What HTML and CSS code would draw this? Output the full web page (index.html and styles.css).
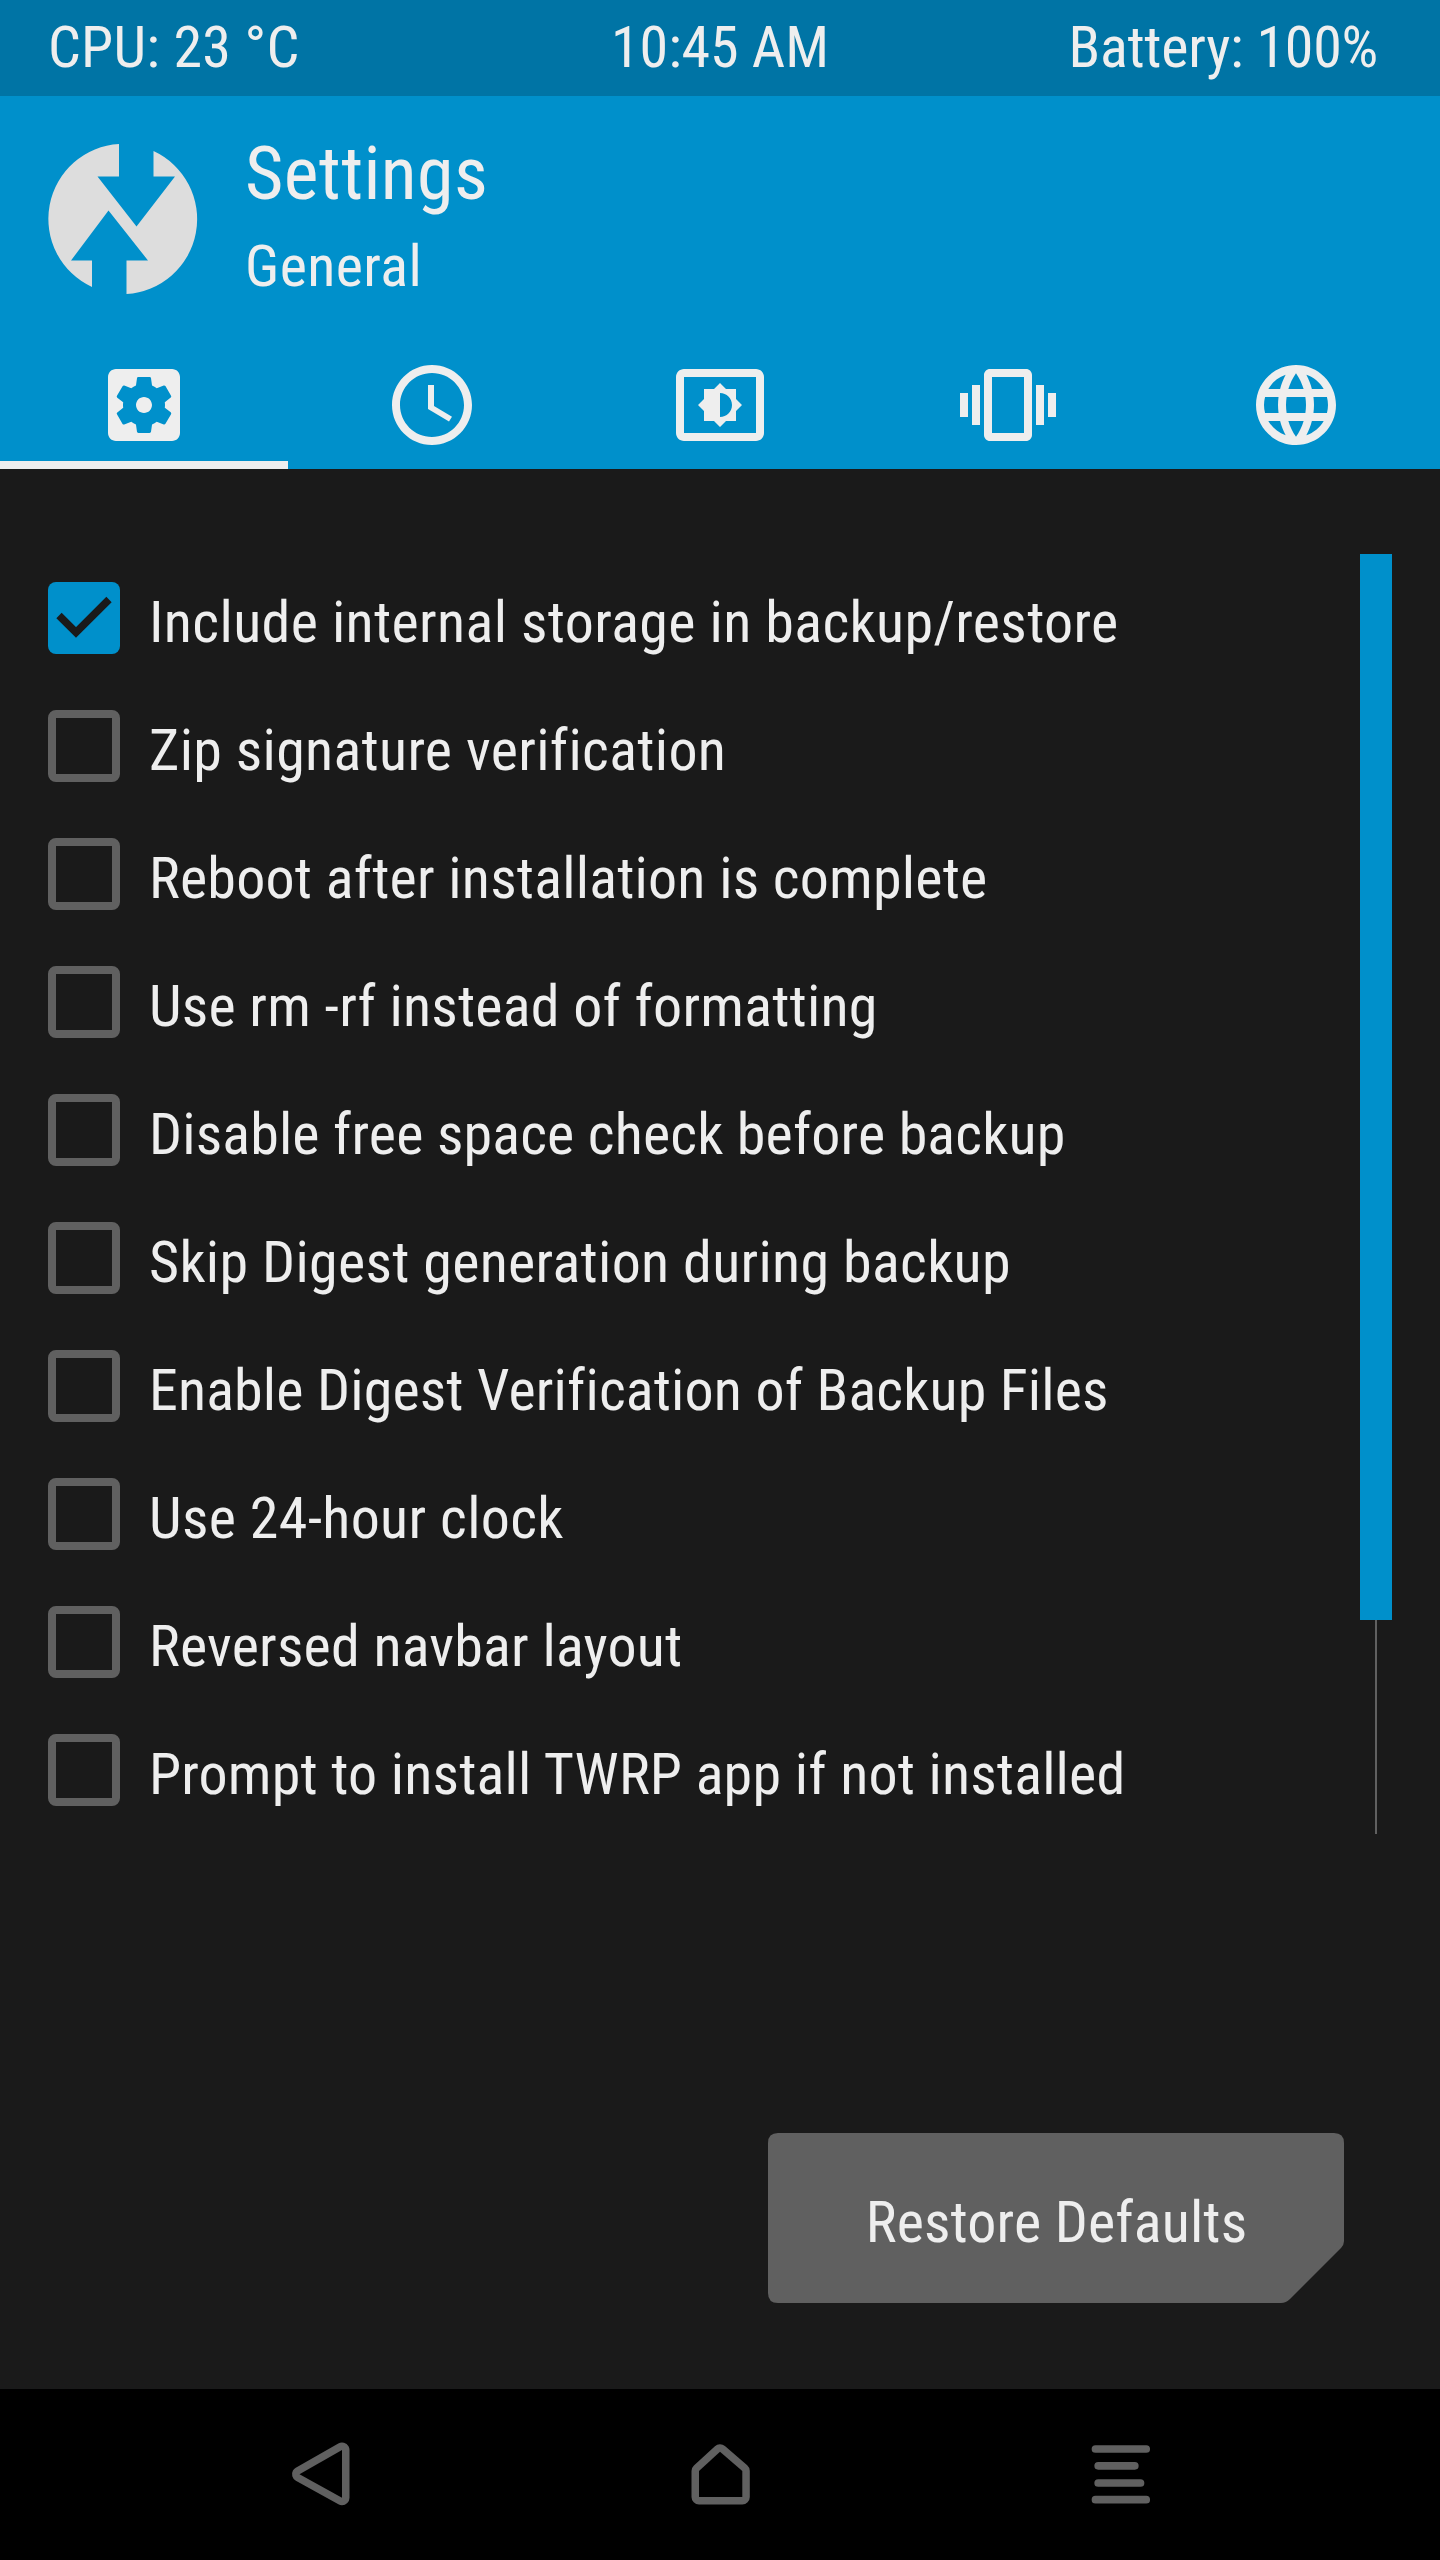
FILE: index.html
```html
<!DOCTYPE html>
<html lang="en">
<head>
<meta charset="utf-8">
<title>Settings</title>
<link rel="stylesheet" href="styles.css">
</head>
<body>
<header class="status">
  <span class="status-cpu">CPU: 23 °C</span>
  <span class="status-time">10:45 AM</span>
  <span class="status-battery">Battery: 100%</span>
</header>
<section class="head">
  <div class="title-row">
    <svg class="logo" viewBox="0 0 150 150" aria-hidden="true"><path fill="#ddd" d="M71 0V32.500H49.500L88.500 82.500L127 32.500H105.500V7A75 75 0 0 1 78.500 150V116.500H100L60.500 66.500L23 116.500H44V143A75 75 0 0 1 71 0Z"/></svg>
    <div class="titles">
      <h1 class="title">Settings</h1>
      <p class="subtitle">General</p>
    </div>
  </div>
  <nav class="tabs">
    <a class="tab tab-active"><svg class="tab-icon" viewBox="0 0 24 24"><path d="M12 10c-1.100 0-2 .9-2 2s.9 2 2 2 2-.9 2-2-.9-2-2-2zm7-7H5c-1.110 0-2 .9-2 2v14c0 1.100.89 2 2 2h14c1.110 0 2-.9 2-2V5c0-1.100-.89-2-2-2zm-1.750 9c0 .23-.02.46-.05.68l1.480 1.160c.13.110.17.300.080.450l-1.400 2.420c-.09.150-.27.210-.43.150l-1.740-.7c-.36.280-.76.510-1.180.690l-.26 1.850c-.03.170-.18.300-.35.300h-2.800c-.17 0-.32-.13-.35-.29l-.26-1.850c-.43-.18-.82-.41-1.180-.69l-1.740.7c-.16.060-.34 0-.43-.15l-1.400-2.420c-.09-.15-.05-.34.080-.45l1.480-1.160c-.03-.23-.05-.46-.05-.69 0-.23.020-.46.050-.68l-1.480-1.160c-.13-.11-.17-.3-.08-.45l1.400-2.420c.09-.15.270-.21.430-.15l1.740.7c.36-.28.760-.51 1.180-.69l.26-1.850c.03-.17.180-.3.350-.3h2.800c.17 0 .32.130.350.290l.26 1.850c.43.180.82.410 1.180.690l1.740-.7c.16-.06.340 0 .43.150l1.400 2.420c.09.150.050.340-.08.450l-1.480 1.160c.03.230.050.460.050.690z"/></svg></a>
    <a class="tab"><svg class="tab-icon" viewBox="0 0 24 24"><path d="M11.990 2C6.470 2 2 6.480 2 12s4.470 10 9.990 10C17.520 22 22 17.520 22 12S17.520 2 11.990 2zM12 20c-4.420 0-8-3.580-8-8s3.580-8 8-8 8 3.580 8 8-3.580 8-8 8zM12.500 7H11v6l5.250 3.150.75-1.230-4.500-2.670z"/></svg></a>
    <a class="tab"><svg class="tab-icon" viewBox="0 0 24 24"><path d="M21 3H3c-1.110 0-2 .89-2 2v14c0 1.100.89 2 2 2h18c1.110 0 2-.9 2-2V5c0-1.110-.89-2-2-2zm0 16H3V5h18v14zM8 16h2.500l1.500 1.500 1.500-1.500H16v-2.500l1.500-1.500-1.500-1.500V8h-2.500L12 6.500 10.500 8H8v2.500L6.500 12 8 13.500V16zm4-7c1.660 0 3 1.340 3 3s-1.340 3-3 3V9z"/></svg></a>
    <a class="tab"><svg class="tab-icon" viewBox="0 0 24 24"><path d="M0 15h2V9H0v6zm3 2h2V7H3v10zm19-8v6h2V9h-2zm-3 8h2V7h-2v10zM16.500 3h-9C6.670 3 6 3.670 6 4.500v15c0 .83.67 1.500 1.500 1.500h9c.83 0 1.500-.67 1.500-1.500v-15c0-.83-.67-1.500-1.500-1.500zM16 19H8V5h8v14z"/></svg></a>
    <a class="tab"><svg class="tab-icon" viewBox="0 0 24 24"><path d="M11.990 2C6.470 2 2 6.480 2 12s4.470 10 9.990 10C17.520 22 22 17.520 22 12S17.520 2 11.990 2zm6.930 6h-2.950c-.32-1.250-.78-2.450-1.380-3.560 1.840.63 3.370 1.910 4.330 3.560zM12 4.040c.83 1.200 1.480 2.530 1.910 3.960h-3.820c.43-1.430 1.080-2.760 1.910-3.960zM4.260 14C4.100 13.360 4 12.690 4 12s.1-1.360.26-2h3.380c-.08.660-.14 1.320-.14 2 0 .68.060 1.340.14 2H4.260zm.82 2h2.950c.32 1.250.78 2.450 1.380 3.560-1.840-.63-3.370-1.900-4.330-3.560zm2.950-8H5.080c.96-1.660 2.490-2.930 4.330-3.560C8.810 5.550 8.350 6.750 8.030 8zM12 19.960c-.83-1.200-1.480-2.530-1.910-3.960h3.820c-.43 1.430-1.080 2.760-1.910 3.960zM14.340 14H9.660c-.09-.66-.16-1.320-.16-2 0-.68.070-1.350.16-2h4.680c.09.650.160 1.320.160 2 0 .68-.07 1.340-.16 2zm.25 5.560c.6-1.110 1.060-2.310 1.380-3.560h2.950c-.96 1.650-2.490 2.930-4.330 3.560zM16.360 14c.08-.66.140-1.320.140-2 0-.68-.06-1.340-.14-2h3.380c.16.640.260 1.310.260 2s-.1 1.360-.26 2h-3.380z"/></svg></a>
  </nav>
</section>
<main class="content">
  <div class="list-row">
    <ul class="options">
      <li class="option"><svg class="box" viewBox="0 0 72 72"><rect width="72" height="72" rx="8" fill="#0090cb"/><path d="M11 33.500L28 50.500L61 17.500" fill="none" stroke="#1a1a1a" stroke-width="7.500"/></svg><span class="label">Include internal storage in backup/restore</span></li>
      <li class="option"><i class="box box-empty"></i><span class="label">Zip signature verification</span></li>
      <li class="option"><i class="box box-empty"></i><span class="label">Reboot after installation is complete</span></li>
      <li class="option"><i class="box box-empty"></i><span class="label">Use rm -rf instead of formatting</span></li>
      <li class="option"><i class="box box-empty"></i><span class="label">Disable free space check before backup</span></li>
      <li class="option"><i class="box box-empty"></i><span class="label">Skip Digest generation during backup</span></li>
      <li class="option"><i class="box box-empty"></i><span class="label">Enable Digest Verification of Backup Files</span></li>
      <li class="option"><i class="box box-empty"></i><span class="label">Use 24-hour clock</span></li>
      <li class="option"><i class="box box-empty"></i><span class="label">Reversed navbar layout</span></li>
      <li class="option"><i class="box box-empty"></i><span class="label">Prompt to install TWRP app if not installed</span></li>
    </ul>
    <div class="scrollbar"><div class="thumb"></div><div class="track"></div></div>
  </div>
  <button class="restore">Restore Defaults</button>
</main>
<footer class="navbar">
  <svg class="nav-icon" viewBox="0 0 80 80"><path class="nav-outline" d="M62 15V62.700L19.500 39.200Z"/></svg>
  <svg class="nav-icon" viewBox="0 0 80 80"><path class="nav-outline" d="M40 16.700L62.300 36V62H19V36Z"/></svg>
  <svg class="nav-icon" viewBox="0 0 80 80"><path class="nav-lines" d="M15.500 14H66.200M18.200 30.800H54.800M18.200 48H60.500M15.500 64.700H66.200"/></svg>
</footer>
</body>
</html>
```
FILE: styles.css
```css
* { box-sizing: border-box; margin: 0; padding: 0; }
body {
  width: 1440px;
  height: 2560px;
  display: flex;
  flex-direction: column;
  background: #1a1a1a;
  color: #eee;
  font: 58px/68px "Roboto Condensed", Roboto, sans-serif;
  font-stretch: 75%;
  font-variant-ligatures: none;
  white-space: nowrap;
}
.status {
  height: 96px;
  display: grid;
  grid-template-columns: 1fr 1fr 1fr;
  padding: 13px 62px 0 48px;
  background: #0074a5;
}
.status-cpu { letter-spacing: .2px; }
.status-time { text-align: center; padding-left: 14px; letter-spacing: -.1px; }
.status-battery { text-align: right; letter-spacing: -.25px; }
.head { height: 373px; background: #0090cb; display: flex; flex-direction: column; justify-content: space-between; }
.title-row { display: flex; gap: 47px; padding: 31px 48px 0; }
.logo { width: 150px; height: 150px; margin-top: 17px; }
.title { font-size: 74px; font-weight: 400; line-height: 94px; letter-spacing: .4px; }
.subtitle { line-height: 68px; margin-top: 11px; letter-spacing: .4px; }
.tabs { display: grid; grid-template-columns: repeat(5, 1fr); height: 136px; }
.tab { display: flex; justify-content: center; }
.tab-active { border-bottom: 8px solid #eee; }
.tab-icon { width: 96px; height: 96px; fill: #eee; margin-top: 24px; }
.content { height: 1920px; padding: 85px 48px 0; display: flex; flex-direction: column; }
.list-row { display: flex; justify-content: space-between; height: 1280px; }
.options { list-style: none; }
.option { display: flex; align-items: center; gap: 29px; height: 128px; letter-spacing: .2px; }
.option:nth-child(1) { letter-spacing: .36px; }
.option:nth-child(2), .option:nth-child(6), .option:nth-child(8) { letter-spacing: .31px; }
.option:nth-child(5), .option:nth-child(7) { letter-spacing: .13px; }
.option:nth-child(10) { letter-spacing: .17px; }
.box { width: 72px; height: 72px; }
.box-empty { border: 8px solid #606060; border-radius: 8px; }
.label { padding-top: 8px; }
.scrollbar { width: 32px; display: flex; flex-direction: column; align-items: center; }
.thumb { width: 32px; height: 1066px; background: #0090cb; }
.track { width: 2px; flex: 1; background: #606060; }
.restore {
  align-self: flex-end;
  width: 576px;
  height: 170px;
  margin: 299px 48px 0 0;
  padding: 8px 0 0 1px;
  border: 0;
  background: #606060;
  color: #eee;
  font: inherit;
  letter-spacing: .15px;
  clip-path: path("M10 0H566Q576 0 576 10V108Q576 112 573 115L522 166Q518 170 513 170H10Q0 170 0 160V10Q0 0 10 0Z");
}
.navbar { height: 171px; background: #000; display: grid; grid-template-columns: repeat(3, 400px); justify-content: center; justify-items: center; padding-top: 46px; }
.nav-icon { width: 80px; height: 80px; stroke: #606060; stroke-linejoin: round; stroke-linecap: round; }
.nav-outline { fill: #000; stroke-width: 15px; paint-order: stroke; }
.nav-lines { fill: none; stroke-width: 7.700px; }
```
